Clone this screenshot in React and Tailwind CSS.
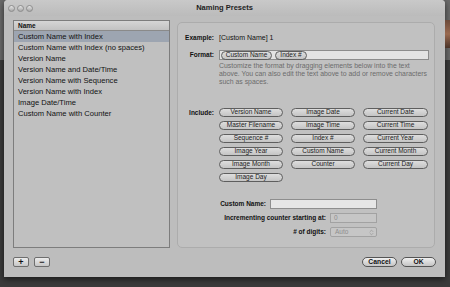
import { ChevronsUpDown } from "lucide-react";

const presets = [
  "Custom Name with Index",
  "Custom Name with Index (no spaces)",
  "Version Name",
  "Version Name and Date/Time",
  "Version Name with Sequence",
  "Version Name with Index",
  "Image Date/Time",
  "Custom Name with Counter",
];

const tokens = [
  "Version Name", "Image Date", "Current Date",
  "Master Filename", "Image Time", "Current Time",
  "Sequence #", "Index #", "Current Year",
  "Image Year", "Custom Name", "Current Month",
  "Image Month", "Counter", "Current Day",
  "Image Day",
];

function Pill({ label, className = "" }) {
  return (
    <div
      className={
        "h-[9px] rounded-full border border-[#5e5e5e] bg-gradient-to-b from-[#dedede] to-[#c4c4c4] flex items-center justify-center text-[6.5px] leading-none text-[#222] " +
        className
      }
    >
      {label}
    </div>
  );
}

function Dot() {
  return (
    <div className="w-[7px] h-[7px] rounded-full border border-[#8c8c8c] bg-gradient-to-b from-[#e4e4e4] to-[#a9a9a9]" />
  );
}

export default function App() {
  return (
    <div
      className="w-[450px] h-[287px] overflow-hidden bg-[linear-gradient(to_bottom,#6a6a6a_0px,#6a6a6a_60px,#3b3b3b_60px)] pl-[4px] text-[#111]"
      style={{ fontFamily: '"Liberation Sans", Arial, sans-serif' }}
    >
      <div className="flex">
        <div className="w-[441px] h-[277px] bg-[#bdbdbd] rounded-t-[4px] shadow-[0_2px_6px_rgba(0,0,0,0.6)] flex flex-col">
          {/* title bar */}
          <div className="h-[16px] flex items-center px-[4px] rounded-t-[4px] bg-gradient-to-b from-[#c9c9c9] to-[#bbbbbb]">
            <div className="flex gap-[2px]">
              <Dot />
              <Dot />
              <Dot />
            </div>
            <div className="flex-1 text-center text-[7.5px] font-bold text-[#222] pr-[25px]">Naming Presets</div>
          </div>

          <div className="flex pl-[9px] pr-[10px] pt-[4px] gap-[7px] h-[232px]">
            {/* list */}
            <div className="w-[157px] h-[228px] border border-[#7d7d7d] bg-[#c0c0c0] flex flex-col">
              <div className="h-[10px] border-b border-[#8a8a8a] bg-gradient-to-b from-[#d6d6d6] to-[#c2c2c2] pl-[4px] text-[6.5px] font-bold leading-[10px]">
                Name
              </div>
              {presets.map((p, i) => (
                <div
                  key={p}
                  className={
                    "h-[11px] pl-[4px] text-[7.6px] leading-[11px] whitespace-nowrap " +
                    (i === 0 ? "bg-[#9da5b1]" : "")
                  }
                >
                  {p}
                </div>
              ))}
            </div>

            {/* group box */}
            <div className="mt-[2px] w-[258px] h-[226px] rounded-[5px] border border-[#acacac] bg-[#c1c1c1] flex flex-col pt-[10px]">
              <div className="flex items-center h-[10px]">
                <div className="w-[36px] text-right text-[6.5px] font-bold">Example:</div>
                <div className="ml-[5px] text-[7px]">[Custom Name] 1</div>
              </div>

              <div className="flex items-center mt-[7px]">
                <div className="w-[36px] text-right text-[6.5px] font-bold">Format:</div>
                <div className="ml-[5px] w-[210px] h-[10px] bg-[#e3e3e3] border border-[#8c8c8c] flex items-center gap-[3px] pl-[1px]">
                  <Pill label="Custom Name" className="w-[51px] h-[8px]" />
                  <Pill label="Index #" className="w-[32px] h-[8px]" />
                </div>
              </div>

              <div className="ml-[41px] mt-[2px] text-[6.9px] leading-[8px] text-[#6c6c6c] whitespace-nowrap">
                Customize the format by dragging elements below into the text
                <br />
                above. You can also edit the text above to add or remove characters
                <br />
                such as spaces.
              </div>

              <div className="flex mt-[22px]">
                <div className="w-[36px] text-right text-[6.5px] font-bold leading-[9px]">Include:</div>
                <div className="ml-[5px] grid grid-cols-[64px_64px_65px] gap-x-[8px] gap-y-[4px]">
                  {tokens.map((t) => (
                    <Pill key={t} label={t} />
                  ))}
                </div>
              </div>

              <div className="flex flex-col items-end pr-[57px] mt-[17px] gap-[4px] text-[6.5px] font-bold">
                <div className="flex items-center gap-[4px]">
                  <span>Custom Name:</span>
                  <div className="w-[107px] h-[10px] bg-[#e6e6e6] border border-[#8e8e8e]" />
                </div>
                <div className="flex items-center gap-[4px]">
                  <span>Incrementing counter starting at:</span>
                  <div className="w-[47px] h-[10px] bg-[#c6c6c6] border border-[#a2a2a2] text-[6.5px] font-normal text-[#8e8e8e] pl-[3px] leading-[8px]">
                    0
                  </div>
                </div>
                <div className="flex items-center gap-[4px]">
                  <span># of digits:</span>
                  <div className="w-[47px] h-[10px] rounded-[2px] bg-[#c6c6c6] border border-[#a2a2a2] text-[6.5px] font-normal text-[#8e8e8e] pl-[4px] flex items-center justify-between pr-[1px]">
                    Auto
                    <ChevronsUpDown size={7} strokeWidth={2} color="#8e8e8e" />
                  </div>
                </div>
              </div>
            </div>
          </div>

          {/* bottom bar */}
          <div className="flex items-center pl-[9px] pr-[9px] pt-[9px]">
            <div className="w-[16px] h-[10px] rounded-[2px] border border-[#6e6e6e] bg-gradient-to-b from-[#ececec] to-[#c6c6c6] flex items-center justify-center text-[9px] font-bold leading-none">
              +
            </div>
            <div className="ml-[5px] w-[16px] h-[10px] rounded-[2px] border border-[#6e6e6e] bg-gradient-to-b from-[#ececec] to-[#c6c6c6] flex items-center justify-center text-[9px] font-bold leading-none">
              −
            </div>
            <div className="flex-1" />
            <div className="w-[35px] h-[10px] rounded-full border border-[#555] bg-gradient-to-b from-[#f0f0f0] to-[#c4c4c4] flex items-center justify-center text-[6.8px] font-bold">
              Cancel
            </div>
            <div className="ml-[4px] w-[35px] h-[10px] rounded-full border border-[#555] bg-gradient-to-b from-[#f0f0f0] to-[#c4c4c4] flex items-center justify-center text-[6.8px] font-bold">
              OK
            </div>
          </div>
        </div>
        {/* desktop photo sliver */}
        <div className="mt-[20px] w-[5px] h-[28px] bg-gradient-to-b from-[#6b4a3a] via-[#9a6a50] to-[#4a3328]" />
      </div>
    </div>
  );
}
